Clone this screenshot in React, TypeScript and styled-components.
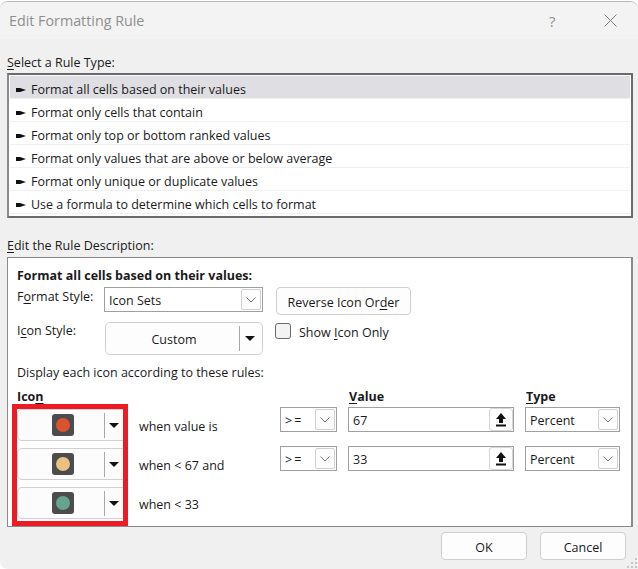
import React from "react";
import styled, { createGlobalStyle } from "styled-components";

const GlobalStyle = createGlobalStyle`
  html, body {
    margin: 0;
    padding: 0;
    background: #ffffff;
  }
  * {
    box-sizing: border-box;
  }
  u {
    text-underline-offset: 2px;
  }
`;

const Dialog = styled.div`
  position: relative;
  width: 638px;
  height: 568px;
  margin-top: 1px;
  background: #f0f0f0;
  border-top: 1px solid #b8b8b8;
  border-radius: 8px 8px 0 8px;
  overflow: hidden;
  font-family: "Open Sans", "Noto Sans", sans-serif;
  font-size: 12.5px;
  color: #1a1a1a;
`;

const TitleBar = styled.div`
  display: flex;
  align-items: center;
  height: 37px;
  padding: 0 21px 0 9px;
  background: #f3f3f3;
`;

const Title = styled.div`
  flex: 1;
  font-size: 14.3px;
  color: #8f8f8f;
`;

const HelpMark = styled.span`
  width: 10px;
  margin-right: 45px;
  font-size: 15px;
  color: #8f8f8f;
`;

const Body = styled.div`
  display: flex;
  flex-direction: column;
  padding: 0 5px 0 7px;
`;

const SectionLabel = styled.div`
  height: 17px;
  line-height: 17px;
`;

const RuleTypeLabel = styled(SectionLabel)`
  margin-top: 15px;
`;

const RuleTypes = styled.div`
  display: flex;
  flex-direction: column;
  height: 145px;
  margin-top: 2px;
  padding: 1px;
  background: #ffffff;
  border: 2px solid #6b6b6b;
  border-left-color: #8a8a8a;
`;

const RuleRow = styled.div<{ $selected?: boolean }>`
  display: flex;
  align-items: center;
  gap: 5px;
  height: 23px;
  padding: 5px 0 0 6px;
  background: ${(p) => (p.$selected ? "#dfdee3" : "#ffffff")};
  border-bottom: 1px solid #f0f0f0;
`;

const RuleMarker = styled.svg`
  width: 10px;
  height: 6px;
  flex: none;
`;

const DescriptionLabel = styled(SectionLabel)`
  margin-top: 19px;
`;

const Description = styled.div`
  position: relative;
  height: 270px;
  margin-top: 3px;
  padding: 10px 0 0 9px;
  background: #ffffff;
  border: 1px solid #8a8a8a;
  border-width: 1px 2px 1px 1px;
`;

const BoldLine = styled.div`
  height: 16px;
  line-height: 16px;
  font-weight: 700;
`;

const StyleGrid = styled.div`
  display: grid;
  grid-template-columns: 87px 171px auto;
  grid-template-rows: 35px 42px;
  margin-top: 3px;
`;

const FieldLabel = styled.div`
  line-height: 16px;
  padding-top: 2px;
`;

const IconStyleLabel = styled(FieldLabel)`
  padding-top: 1px;
`;

const ComboBox = styled.div<{ $width?: number }>`
  display: flex;
  align-items: center;
  justify-content: space-between;
  width: ${(p) => p.$width ?? 159}px;
  height: 25px;
  padding: 0 1px 0 4px;
  background: #ffffff;
  border: 1px solid #a0a0a0;
`;

const ComboText = styled.span`
  padding-top: 2px;
`;

const ChevronButton = styled.div`
  display: flex;
  align-items: center;
  justify-content: center;
  width: 20px;
  height: 21px;
  background: #fdfdfd;
  border: 1px solid #d0d0d0;
  border-radius: 2px;
`;

const Chevron = () => (
  <svg width="10" height="6" viewBox="0 0 10 6" fill="none">
    <path d="M0.5 0.5L5 5L9.5 0.5" stroke="#6a6a6a" strokeWidth="0.9" />
  </svg>
);

const PushButton = styled.div<{ $width: number }>`
  display: flex;
  align-items: center;
  justify-content: center;
  width: ${(p) => p.$width}px;
  height: 28px;
  padding-top: 2px;
  background: #fdfdfd;
  border: 1px solid #cfcfcf;
  border-radius: 4px;
`;

const ReverseButton = styled(PushButton)`
  margin: 0 0 0 1px;
`;

const SplitButton = styled.div`
  display: flex;
  align-items: center;
  width: 158px;
  height: 33px;
  margin-left: 1px;
  padding-right: 7px;
  background: #fdfdfd;
  border: 1px solid #d0d0d0;
  border-radius: 5px;
`;

const SplitLabel = styled.div`
  flex: 1;
  text-align: center;
  padding: 2px 0 0 3px;
`;

const SplitDivider = styled.div`
  width: 1px;
  height: 25px;
  margin-right: 5px;
  background: #a8a8a8;
`;

const ArrowDown = styled.div`
  width: 0;
  height: 0;
  border-style: solid;
  border-width: 5px 5px 0 5px;
  border-color: #111111 transparent transparent transparent;
`;

const CheckRow = styled.div`
  display: flex;
  align-items: flex-start;
  gap: 8px;
  line-height: 16px;
`;

const CheckBox = styled.div`
  width: 16px;
  height: 16px;
  margin-top: 1px;
  background: #f3f3f3;
  border: 1px solid #6a6a6a;
  border-radius: 3px;
`;

const CheckLabel = styled.span`
  padding-top: 3px;
`;

const DisplayLine = styled.div`
  height: 16px;
  line-height: 16px;
  margin-top: 1px;
`;

const HeaderRow = styled.div`
  display: grid;
  grid-template-columns: 332px 177px auto;
  height: 16px;
  line-height: 18px;
  margin-top: 7px;
  font-weight: 700;
`;

const RulesArea = styled.div`
  display: flex;
  margin: 0 0 0 -5px;
`;

const Highlight = styled.div`
  display: flex;
  flex-direction: column;
  gap: 7px;
  width: 116px;
  height: 122px;
  border: 5px solid #ed1c24;
  overflow: hidden;
`;

const IconPicker = styled.div`
  display: flex;
  align-items: center;
  flex: none;
  width: 112px;
  height: 32px;
  background: #fcfcfc;
  border: 1px solid #d0d0d0;
  border-radius: 5px;
`;

const IconSlot = styled.div`
  display: flex;
  justify-content: center;
  width: 86px;
  padding-left: 4px;
`;

const PickerDivider = styled.div`
  width: 1px;
  height: 25px;
  margin-right: 4px;
  background: #a8a8a8;
`;

const SignalTile = styled.div`
  display: flex;
  align-items: center;
  justify-content: center;
  width: 22px;
  height: 22px;
  background: #4c4c4c;
  border-radius: 3px;
`;

const SignalLight = styled.div<{ $color: string }>`
  width: 14px;
  height: 14px;
  border-radius: 50%;
  background: ${(p) => p.$color};
`;

const Conditions = styled.div`
  display: flex;
  flex-direction: column;
  gap: 7px;
  padding-left: 11px;
  margin-top: 3px;
`;

const ConditionRow = styled.div`
  display: flex;
  align-items: flex-start;
  height: 32px;
`;

const WhenLabel = styled.div`
  width: 141px;
  line-height: 16px;
  margin-top: 12px;
`;

const Operator = styled(ComboBox)`
  margin-right: 11px;
  letter-spacing: 2px;
`;

const ValueInput = styled.div`
  display: flex;
  align-items: center;
  justify-content: space-between;
  width: 166px;
  height: 25px;
  margin-right: 11px;
  padding-left: 4px;
  border: 1px solid #a0a0a0;
`;

const PickButton = styled.div`
  display: flex;
  align-items: center;
  justify-content: center;
  width: 24px;
  height: 23px;
  background: #fdfdfd;
  border: 1px solid #d6d6d6;
  border-radius: 3px;
`;

const Footer = styled.div`
  display: flex;
  justify-content: flex-end;
  gap: 13px;
  margin-top: 5px;
  padding-right: 7px;
`;

const Grip = styled.svg`
  position: absolute;
  right: 0;
  bottom: 0;
  width: 11px;
  height: 11px;
`;

const rules = [
  "Format all cells based on their values",
  "Format only cells that contain",
  "Format only top or bottom ranked values",
  "Format only values that are above or below average",
  "Format only unique or duplicate values",
  "Use a formula to determine which cells to format",
];

const icons = ["#d9532f", "#e8c080", "#66a38f"];

const conditions = [
  { when: "when value is", value: "67" },
  { when: "when < 67 and", value: "33" },
];

export default function App() {
  return (
    <>
      <GlobalStyle />
      <Dialog>
        <TitleBar>
          <Title>Edit Formatting Rule</Title>
          <HelpMark>?</HelpMark>
          <svg width="13" height="13" viewBox="0 0 13 13" fill="none">
            <path d="M0.5 0.5L12.5 12.5M12.5 0.5L0.5 12.5" stroke="#7a7a7a" strokeWidth="1" />
          </svg>
        </TitleBar>
        <Body>
          <RuleTypeLabel>
            <u>S</u>elect a Rule Type:
          </RuleTypeLabel>
          <RuleTypes>
            {rules.map((rule, i) => (
              <RuleRow key={rule} $selected={i === 0}>
                <RuleMarker viewBox="0 0 10 6">
                  <path d="M0 1H4L10 3L4 5H0Z" fill="#111" />
                </RuleMarker>
                {rule}
              </RuleRow>
            ))}
          </RuleTypes>
          <DescriptionLabel>
            <u>E</u>dit the Rule Description:
          </DescriptionLabel>
          <Description>
            <BoldLine>Format all cells based on their values:</BoldLine>
            <StyleGrid>
              <FieldLabel>
                F<u>o</u>rmat Style:
              </FieldLabel>
              <ComboBox>
                <ComboText>Icon Sets</ComboText>
                <ChevronButton>
                  <Chevron />
                </ChevronButton>
              </ComboBox>
              <ReverseButton $width={135}>
                <span>
                  Reverse Icon Or<u>d</u>er
                </span>
              </ReverseButton>
              <IconStyleLabel>
                I<u>c</u>on Style:
              </IconStyleLabel>
              <SplitButton>
                <SplitLabel>Custom</SplitLabel>
                <SplitDivider />
                <ArrowDown />
              </SplitButton>
              <CheckRow>
                <CheckBox />
                <CheckLabel>
                  Show <u>I</u>con Only
                </CheckLabel>
              </CheckRow>
            </StyleGrid>
            <DisplayLine>Display each icon according to these rules:</DisplayLine>
            <HeaderRow>
              <span>
                Ico<u>n</u>
              </span>
              <span>
                <u>V</u>alue
              </span>
              <span>
                <u>T</u>ype
              </span>
            </HeaderRow>
            <RulesArea>
              <Highlight>
                {icons.map((color) => (
                  <IconPicker key={color}>
                    <IconSlot>
                      <SignalTile>
                        <SignalLight $color={color} />
                      </SignalTile>
                    </IconSlot>
                    <PickerDivider />
                    <ArrowDown />
                  </IconPicker>
                ))}
              </Highlight>
              <Conditions>
                {conditions.map((c) => (
                  <ConditionRow key={c.value}>
                    <WhenLabel>{c.when}</WhenLabel>
                    <Operator $width={57}>
                      <ComboText>{">="}</ComboText>
                      <ChevronButton>
                        <Chevron />
                      </ChevronButton>
                    </Operator>
                    <ValueInput>
                      <ComboText>{c.value}</ComboText>
                      <PickButton>
                        <svg width="12" height="14" viewBox="0 0 12 14">
                          <path d="M6 0L11 6H8V10H4V6H1Z" fill="#111" />
                          <rect x="1" y="11.5" width="10" height="2" fill="#111" />
                        </svg>
                      </PickButton>
                    </ValueInput>
                    <ComboBox $width={95}>
                      <ComboText>Percent</ComboText>
                      <ChevronButton>
                        <Chevron />
                      </ChevronButton>
                    </ComboBox>
                  </ConditionRow>
                ))}
                <ConditionRow>
                  <WhenLabel>when &lt; 33</WhenLabel>
                </ConditionRow>
              </Conditions>
            </RulesArea>
          </Description>
          <Footer>
            <PushButton $width={86}>OK</PushButton>
            <PushButton $width={86}>Cancel</PushButton>
          </Footer>
        </Body>
        <Grip viewBox="0 0 11 11">
          <g fill="#c4c4c4">
            <rect x="8" y="0" width="2" height="2" />
            <rect x="4" y="4" width="2" height="2" />
            <rect x="8" y="4" width="2" height="2" />
            <rect x="0" y="8" width="2" height="2" />
            <rect x="4" y="8" width="2" height="2" />
            <rect x="8" y="8" width="2" height="2" />
          </g>
        </Grip>
      </Dialog>
    </>
  );
}
